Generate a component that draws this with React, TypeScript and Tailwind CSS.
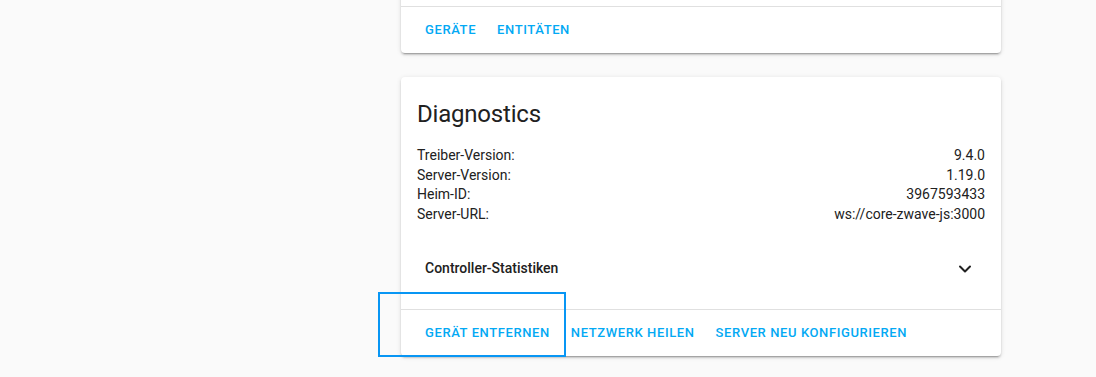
import { ChevronDown } from "lucide-react";

const diagnostics = [
  ["Treiber-Version:", "9.4.0"],
  ["Server-Version:", "1.19.0"],
  ["Heim-ID:", "3967593433"],
  ["Server-URL:", "ws://core-zwave-js:3000"],
];

function ActionButton({ label }: { label: string }) {
  return (
    <button className="h-9 px-2 text-[13px] font-medium tracking-[0.6px] uppercase text-[#03a9f4] rounded">
      {label}
    </button>
  );
}

function Card({ children }: { children: React.ReactNode }) {
  return (
    <div className="bg-white rounded-[4px] shadow-[0_2px_2px_0_rgba(0,0,0,0.14),0_1px_5px_0_rgba(0,0,0,0.12),0_3px_1px_-2px_rgba(0,0,0,0.2)]">
      {children}
    </div>
  );
}

export default function App() {
  return (
    <div
      className="relative w-[1096px] h-[377px] overflow-hidden bg-[#fafafa] text-[#212121]"
      style={{ fontFamily: "Roboto, 'Noto Sans', sans-serif" }}
    >
      <div className="pl-[401px] -mt-[39px] flex flex-col gap-6 w-[1001px]">
        <Card>
          <div className="h-[45px]" />
          <div className="border-t border-[#e0e0e0] flex items-center gap-[5px] px-4 py-[5px]">
            <ActionButton label="Geräte" />
            <ActionButton label="Entitäten" />
          </div>
        </Card>

        <Card>
          <div className="px-4 pt-[21px] pb-4 text-[24px] leading-8 tracking-[-0.2px]">
            Diagnostics
          </div>
          <div className="px-4 pb-4">
            <div className="text-[14px] leading-[19.7px]">
              {diagnostics.map(([k, v]) => (
                <div key={k} className="flex justify-between">
                  <span>{k}</span>
                  <span>{v}</span>
                </div>
              ))}
            </div>
            <div className="mt-[20px] h-12 px-2 flex items-center justify-between">
              <span className="text-[14px] font-medium">Controller-Statistiken</span>
              <ChevronDown size={20} strokeWidth={2.4} className="mr-[2px]" />
            </div>
          </div>
          <div className="border-t border-[#e0e0e0] flex items-center gap-[5px] px-4 py-[5px]">
            <ActionButton label="Gerät entfernen" />
            <ActionButton label="Netzwerk heilen" />
            <ActionButton label="Server neu konfigurieren" />
          </div>
        </Card>
      </div>

      <div className="absolute left-[378px] top-[292px] w-[188px] h-[65px] border-2 border-[#0896f4] pointer-events-none" />
    </div>
  );
}
